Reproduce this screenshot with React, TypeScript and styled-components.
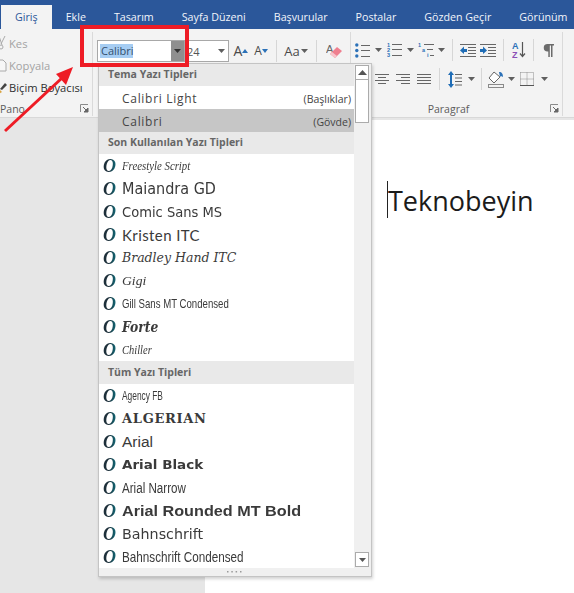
import styled, { createGlobalStyle } from "styled-components";

const Global = createGlobalStyle`
  html, body { margin: 0; padding: 0; background: #e6e6e6; }
  * { box-sizing: border-box; }
`;

const UI = `"Open Sans", "Noto Sans", sans-serif`;

const Page = styled.div`
  position: relative;
  width: 574px;
  height: 593px;
  overflow: hidden;
  font-family: ${UI};
  display: flex;
  flex-direction: column;
`;

const TabBar = styled.div`
  height: 29px;
  background: #2b579a;
  display: flex;
  align-items: flex-end;
  padding-left: 1px;
  white-space: nowrap;
  flex: none;
`;

const Tab = styled.div<{ $active?: boolean }>`
  height: ${(p) => (p.$active ? "24px" : "29px")};
  padding: ${(p) => (p.$active ? "3px" : "8px")} 14px 0;
  font-size: 10.7px;
  line-height: 18px;
  background: ${(p) => (p.$active ? "#f3f3f3" : "transparent")};
  color: ${(p) => (p.$active ? "#2b579a" : "#f2f5fa")};
`;

const Ribbon = styled.div`
  height: 89px;
  background: #f3f3f3;
  border-bottom: 1px solid #d8d8d8;
  display: flex;
  flex: none;
`;

const Group = styled.div<{ $width: number }>`
  width: ${(p) => p.$width}px;
  flex: none;
  display: flex;
  flex-direction: column;
  position: relative;
  border-right: 1px solid #dadada;
  margin: 3px 0 1px;
`;

const GroupBody = styled.div`
  flex: 1;
  display: flex;
  flex-direction: column;
`;

const GroupLabel = styled.div<{ $offset?: number }>`
  height: 15px;
  padding-top: 1px;
  font-size: 10.5px;
  line-height: 14px;
  text-align: center;
  color: #5c5c5c;
  padding-right: ${(p) => p.$offset ?? 0}px;
  position: relative;
`;

const Launcher = styled.svg`
  position: absolute;
  right: 3px;
  top: 3px;
`;

const ClipRow = styled.div<{ $muted?: boolean }>`
  height: 22px;
  display: flex;
  align-items: center;
  font-size: 11.2px;
  gap: 2px;
  color: ${(p) => (p.$muted ? "#a3a3a3" : "#2f2f2f")};
  white-space: nowrap;
`;

const ClipList = styled.div`
  flex: 1;
`;

const ToolRow = styled.div<{ $height: number; $pad?: number }>`
  height: ${(p) => p.$height}px;
  display: flex;
  align-items: center;
  padding-left: ${(p) => p.$pad ?? 0}px;
  flex: none;
`;

const Tool = styled.div<{ $width: number }>`
  width: ${(p) => p.$width}px;
  height: 20px;
  flex: none;
  display: flex;
  align-items: center;
  justify-content: center;
`;

const Sep = styled.div<{ $margin?: number }>`
  width: 1px;
  height: 22px;
  background: #d6d6d6;
  flex: none;
  margin: 0 ${(p) => p.$margin ?? 4}px;
`;

const Combo = styled.div<{ $width: number }>`
  width: ${(p) => p.$width}px;
  height: 22px;
  border: 1px solid #a8a8a8;
  background: #fff;
  display: flex;
  align-items: center;
  flex: none;
  font-size: 11px;
  color: #555;
`;

const Selected = styled.span`
  background: #a6cdf3;
  color: #33506e;
  margin-left: 2px;
  padding: 0 1px;
  line-height: 14px;
  width: 33px;
`;

const ComboButton = styled.div`
  margin-left: auto;
  width: 13px;
  height: 20px;
  background: #8f8f8f;
  display: flex;
  align-items: center;
  justify-content: center;
`;

const SizeText = styled.span`
  margin-left: 1px;
  flex: 1;
`;

const GrowLetter = styled.span<{ $size: number }>`
  font-size: ${(p) => p.$size}px;
  color: #4a4a4a;
  line-height: 1;
`;

const Workspace = styled.div`
  flex: 1;
  display: flex;
  background: #e6e6e6;
  padding: 2px 0 0 205px;
  min-height: 0;
`;

const Sheet = styled.div`
  flex: 1;
  background: #fff;
  padding: 61px 0 0 182px;
`;

const Caret = styled.div`
  display: inline-block;
  border-left: 1px solid #222;
  height: 37px;
  font-family: "Open Sans", sans-serif;
  font-size: 27px;
  line-height: 39px;
  color: #1b1b1b;
  white-space: nowrap;
`;

const Dropdown = styled.div`
  position: absolute;
  left: 98px;
  top: 63px;
  width: 274px;
  height: 514px;
  background: #fff;
  border: 1px solid #c4c4c4;
  box-shadow: 1px 2px 3px rgba(0, 0, 0, 0.18);
  display: flex;
  flex-direction: column;
`;

const DropBody = styled.div`
  flex: 1;
  display: flex;
  min-height: 0;
`;

const List = styled.div`
  width: 255px;
  flex: none;
  overflow: hidden;
`;

const Heading = styled.div<{ $height: number }>`
  height: ${(p) => p.$height}px;
  background: #e9e9e9;
  font-size: 10.5px;
  font-weight: 700;
  color: #666;
  padding: 0 0 2px 9px;
  display: flex;
  align-items: center;
`;

const ThemeRow = styled.div<{ $active?: boolean }>`
  height: 23px;
  display: flex;
  align-items: center;
  justify-content: space-between;
  padding: 2px 3px 0 23px;
  background: ${(p) => (p.$active ? "#c6c6c6" : "#fff")};
  font-size: 12px;
  letter-spacing: 0.7px;
  color: #444;
`;

const ThemeTag = styled.span`
  font-size: 10.5px;
  letter-spacing: 0;
  color: #444;
`;

const FontRow = styled.div`
  height: 23px;
  display: flex;
  align-items: center;
  padding-left: 4px;
  white-space: nowrap;
`;

const FontIcon = styled.span`
  width: 19px;
  flex: none;
  font-family: "Liberation Serif", serif;
  font-style: italic;
  font-weight: 700;
  font-size: 18px;
  line-height: 20px;
  background: linear-gradient(90deg, #1d2f3a 30%, #0b8493 85%);
  -webkit-background-clip: text;
  background-clip: text;
  color: transparent;
`;

const FontName = styled.span<{
  $family: string;
  $size: number;
  $weight?: number;
  $italic?: boolean;
  $squeeze?: number;
  $track?: number;
}>`
  font-family: ${(p) => p.$family};
  font-size: ${(p) => p.$size}px;
  line-height: 20px;
  font-weight: ${(p) => p.$weight ?? 400};
  font-style: ${(p) => (p.$italic ? "italic" : "normal")};
  letter-spacing: ${(p) => p.$track ?? 0}px;
  display: inline-block;
  transform: scaleX(${(p) => p.$squeeze ?? 1});
  transform-origin: left center;
  color: #3a3a3a;
`;

const Rail = styled.div`
  flex: 1;
  background: #f0f0f0;
  padding: 1px 2px 1px 1px;
  display: flex;
  flex-direction: column;
`;

const RailButton = styled.div`
  height: 15px;
  border: 1px solid #ababab;
  background: #fff;
  display: flex;
  align-items: center;
  justify-content: center;
  flex: none;
`;

const Thumb = styled.div`
  height: 43px;
  border: 1px solid #ababab;
  border-top: none;
  background: #fff;
  flex: none;
`;

const RailSpace = styled.div`
  flex: 1;
`;

const Grip = styled.div`
  height: 8px;
  flex: none;
  background: #f0f0f0;
  display: flex;
  align-items: center;
  justify-content: center;
  padding-right: 1px;
`;

const RedBox = styled.div`
  position: absolute;
  left: 80px;
  top: 25px;
  width: 109px;
  height: 42px;
  border: 4px solid #ee1c25;
`;

const RedArrow = styled.svg`
  position: absolute;
  left: 0;
  top: 60px;
`;

const Down = ({ color = "#5f5f5f" }: { color?: string }) => (
  <svg width="7" height="4" viewBox="0 0 7 4">
    <path d="M0 0h7L3.500 4z" fill={color} />
  </svg>
);

const Up = () => (
  <svg width="9" height="5" viewBox="0 0 9 5">
    <path d="M0 5h9L4.500 0z" fill="#555" />
  </svg>
);

const GripDots = () => (
  <svg width="15" height="2" viewBox="0 0 15 2">
    {[0, 4.3, 8.6, 13].map((x) => (
      <rect key={x} x={x} y="0" width="1.500" height="1.500" fill="#9a9a9a" />
    ))}
  </svg>
);

const Lines = ({ x = 0, w = 14, rows = [2, 6, 10] }: { x?: number; w?: number; rows?: number[] }) => (
  <>
    {rows.map((y) => (
      <rect key={y} x={x} y={y} width={w} height="1" fill="#666" />
    ))}
  </>
);

const Bullets = () => (
  <svg width="15" height="15" viewBox="0 0 15 15">
    {[2, 7.5, 13].map((y) => (
      <circle key={y} cx="1.800" cy={y} r="1.700" fill="#2b71b8" />
    ))}
    <Lines x={6} w={9} rows={[2, 7, 13]} />
  </svg>
);

const Numbers = () => (
  <svg width="15" height="17" viewBox="0 0 15 17">
    {["1", "2", "3"].map((n, i) => (
      <text key={n} x="0" y={4.5 + i * 5} fontFamily="Liberation Sans" fontWeight="700" fontSize="5.5" fill="#2b71b8">
        {n}
      </text>
    ))}
    <Lines x={5} w={10} rows={[2, 7, 13]} />
  </svg>
);

const Multilevel = () => (
  <svg width="17" height="17" viewBox="0 0 17 17">
    <text x="0" y="4.5" fontFamily="Liberation Sans" fontWeight="700" fontSize="5.5" fill="#2b71b8">1</text>
    <text x="4" y="9.5" fontFamily="Liberation Sans" fontWeight="700" fontSize="5.5" fill="#2b71b8">a</text>
    <text x="9" y="14.5" fontFamily="Liberation Sans" fontWeight="700" fontSize="5.5" fill="#2b71b8">i</text>
    <rect x="6" y="2" width="10" height="1" fill="#666" />
    <rect x="9" y="7" width="6" height="1" fill="#666" />
    <rect x="12" y="13" width="4" height="1" fill="#666" />
  </svg>
);

const Indent = ({ flip }: { flip?: boolean }) => (
  <svg width="16" height="13" viewBox="0 0 16 13">
    <rect x="0" y="0" width="16" height="1" fill="#666" />
    <rect x="8" y="3" width="8" height="1" fill="#666" />
    <rect x="8" y="6" width="8" height="1" fill="#666" />
    <rect x="8" y="9" width="8" height="1" fill="#666" />
    <rect x="0" y="12" width="16" height="1" fill="#666" />
    <path d={flip ? "M0 5h3V2.500L7 6.500 3 10V8H0z" : "M7 5H4V2.500L0 6.500 4 10V8h3z"} fill="#1f6cb5" />
  </svg>
);

const SortIcon = () => (
  <svg width="14" height="20" viewBox="0 -1 14 20">
    <text x="0" y="8" fontFamily="Liberation Sans" fontWeight="700" fontSize="9" fill="#2b71b8">A</text>
    <text x="0" y="16.500" fontFamily="Liberation Sans" fontWeight="700" fontSize="9" fill="#8b4fb5">Z</text>
    <path d="M10.500 1v14M8 12.500l2.500 3 2.500-3" stroke="#555" fill="none" strokeWidth="1.200" />
  </svg>
);

const Pilcrow = () => (
  <svg width="11" height="13" viewBox="0 0 11 13">
    <path d="M4.500 0H11v1.500H9.500V13H8V1.500H6.800V13H5.300V7.500h-.8A3.750 3.750 0 0 1 4.500 0z" fill="#6b6b6b" />
  </svg>
);

const AlignCenter = () => (
  <svg width="14" height="11" viewBox="0 0 14 11">
    <path d="M0 .5h14M3 3.500h8M0 6.500h14M3 9.500h8" stroke="#666" />
  </svg>
);

const AlignRight = () => (
  <svg width="14" height="11" viewBox="0 0 14 11">
    <path d="M0 .5h14M5 3.500h9M0 6.500h14M5 9.500h9" stroke="#666" />
  </svg>
);

const Justify = () => (
  <svg width="14" height="11" viewBox="0 0 14 11">
    <path d="M0 .5h14M0 3.500h14M0 6.500h14M0 9.500h14" stroke="#666" />
  </svg>
);

const LineSpacing = () => (
  <svg width="14" height="17" viewBox="0 0 14 17">
    <path d="M3 0 6 4H4v9h2l-3 4-3-4h2V4H0z" fill="#1f6cb5" />
    <path d="M7 3.500h7M7 7h7M7 10.500h7M7 14h7" stroke="#666" />
  </svg>
);

const Shading = () => (
  <svg width="16" height="17" viewBox="0 0 16 17">
    <path d="M6 1 1 7l5 5 6-6z" fill="#fff" stroke="#666" />
    <path d="M11 1c3 0 4 2 4 5l-2-1-1 1z" fill="#2b71b8" />
    <rect x="0.500" y="13.500" width="15" height="3" fill="#f3f3f3" stroke="#8a8a8a" />
  </svg>
);

const Borders = () => (
  <svg width="14" height="14" viewBox="0 0 14 14">
    <path
      d="M.5 .5h13v13M.5 .5v13M7 .5v13M.5 7h13"
      stroke="#8c8c8c"
      strokeDasharray="1 1"
      fill="none"
    />
    <path d="M0 13.500h14" stroke="#555" />
  </svg>
);

const Eraser = () => (
  <svg width="17" height="17" viewBox="0 0 17 17">
    <text x="0" y="10" fontFamily="Liberation Sans" fontSize="11" fill="#666">A</text>
    <path d="M4 11 11 4l5 4-7 7z" fill="#ef7f8f" />
    <path d="M4 11l2-2 5 4-2 2z" fill="#f8c5cc" />
  </svg>
);

const GrowMark = ({ down }: { down?: boolean }) => (
  <svg width="6" height="4" viewBox="0 0 6 4">
    <path d={down ? "M0 0h6L3 4z" : "M0 4h6L3 0z"} fill="#2b71b8" />
  </svg>
);

const ScissorsIcon = () => (
  <svg width="7" height="14" viewBox="0 0 7 14">
    <circle cx="1" cy="11" r="2" fill="none" stroke="#aaa" />
    <path d="M1 8 5 0M2 9l-3-9" stroke="#aaa" />
  </svg>
);

const PageIcon = () => (
  <svg width="7" height="13" viewBox="0 0 7 13">
    <path d="M-3 1h6l3 3v8h-9z" fill="#f7f7f7" stroke="#aaa" />
  </svg>
);

const BrushIcon = () => (
  <svg width="7" height="13" viewBox="0 0 7 13">
    <path d="M0 8 5 2l2 2-5 5z" fill="#444" />
    <path d="M-1 8l3 3-3 2z" fill="#d9a441" />
  </svg>
);

const LauncherIcon = () => (
  <Launcher width="9" height="9" viewBox="0 0 9 9">
    <path d="M.5 8V.5H8" stroke="#8a8a8a" fill="none" />
    <path d="M3 3l4 4M8 4v4H4z" stroke="#666" fill="#666" />
  </Launcher>
);

const themeFonts = [
  { name: "Calibri Light", tag: "(Başlıklar)" },
  { name: "Calibri", tag: "(Gövde)", active: true },
];

type Preview = {
  name: string;
  family: string;
  size: number;
  weight?: number;
  italic?: boolean;
  squeeze?: number;
  track?: number;
};

const SERIF = `"Liberation Serif", serif`;
const SANS = `"Liberation Sans", sans-serif`;
const DEJA = `"DejaVu Sans", sans-serif`;
const DEJA_SERIF = `"DejaVu Serif", serif`;

const recentFonts: Preview[] = [
  { name: "Freestyle Script", family: SERIF, size: 12, italic: true, squeeze: 0.9 },
  { name: "Maiandra GD", family: DEJA, size: 15, squeeze: 0.96 },
  { name: "Comic Sans MS", family: DEJA, size: 13.5, squeeze: 0.97 },
  { name: "Kristen ITC", family: `"Lato", sans-serif`, size: 15, track: 0.4 },
  { name: "Bradley Hand ITC", family: DEJA_SERIF, size: 12.5, italic: true, squeeze: 1.0 },
  { name: "Gigi", family: SERIF, size: 13, italic: true, squeeze: 1.05 },
  { name: "Gill Sans MT Condensed", family: SANS, size: 13, squeeze: 0.74 },
  { name: "Forte", family: DEJA_SERIF, size: 14, weight: 700, italic: true, squeeze: 0.88 },
  { name: "Chiller", family: SERIF, size: 12.5, italic: true, squeeze: 0.84 },
];

const allFonts: Preview[] = [
  { name: "Agency FB", family: SANS, size: 13.5, squeeze: 0.62 },
  { name: "ALGERIAN", family: DEJA_SERIF, size: 13, weight: 700, track: 0.7 },
  { name: "Arial", family: SANS, size: 15.5 },
  { name: "Arial Black", family: DEJA, size: 12.5, weight: 700, squeeze: 1.08 },
  { name: "Arial Narrow", family: SANS, size: 14, squeeze: 0.83 },
  { name: "Arial Rounded MT Bold", family: SANS, size: 15, weight: 700, squeeze: 1.08 },
  { name: "Bahnschrift", family: DEJA, size: 14, squeeze: 1.02 },
  { name: "Bahnschrift Condensed", family: SANS, size: 15, weight: 400, squeeze: 0.78 },
];

const Row = ({ font }: { font: Preview }) => (
  <FontRow>
    <FontIcon>O</FontIcon>
    <FontName
      $family={font.family}
      $size={font.size}
      $weight={font.weight}
      $italic={font.italic}
      $squeeze={font.squeeze}
      $track={font.track}
    >
      {font.name}
    </FontName>
  </FontRow>
);

const tabs = ["Giriş", "Ekle", "Tasarım", "Sayfa Düzeni", "Başvurular", "Postalar", "Gözden Geçir", "Görünüm"];

export default function App() {
  return (
    <Page>
      <Global />
      <TabBar>
        {tabs.map((t, i) => (
          <Tab key={t} $active={i === 0}>
            {t}
          </Tab>
        ))}
      </TabBar>

      <Ribbon>
        <Group $width={93}>
          <GroupBody>
            <ClipList>
              <ClipRow $muted>
                <ScissorsIcon />
                Kes
              </ClipRow>
              <ClipRow $muted>
                <PageIcon />
                Kopyala
              </ClipRow>
              <ClipRow>
                <BrushIcon />
                Biçim Boyacısı
              </ClipRow>
            </ClipList>
          </GroupBody>
          <GroupLabel $offset={70}>
            Pano
            <LauncherIcon />
          </GroupLabel>
        </Group>

        <Group $width={258}>
          <GroupBody>
            <ToolRow $height={38} $pad={4}>
              <Combo $width={88}>
                <Selected>Calibri</Selected>
                <ComboButton>
                  <Down color="#333" />
                </ComboButton>
              </Combo>
              <Combo $width={44}>
                <SizeText>24</SizeText>
                <Tool $width={13}>
                  <Down />
                </Tool>
              </Combo>
              <Tool $width={2} />
              <Tool $width={20}>
                <GrowLetter $size={14}>A</GrowLetter>
                <GrowMark />
              </Tool>
              <Tool $width={20}>
                <GrowLetter $size={12}>A</GrowLetter>
                <GrowMark down />
              </Tool>
              <Sep $margin={5} />
              <Tool $width={30}>
                <GrowLetter $size={13}>Aa</GrowLetter>
                <Tool $width={10}>
                  <Down />
                </Tool>
              </Tool>
              <Sep $margin={4} />
              <Tool $width={26}>
                <Eraser />
              </Tool>
            </ToolRow>
          </GroupBody>
        </Group>

        <Group $width={212}>
          <GroupBody>
            <ToolRow $height={36} $pad={2}>
              <Tool $width={18}>
                <Bullets />
              </Tool>
              <Tool $width={14}>
                <Down />
              </Tool>
              <Tool $width={18}>
                <Numbers />
              </Tool>
              <Tool $width={14}>
                <Down />
              </Tool>
              <Tool $width={18}>
                <Multilevel />
              </Tool>
              <Tool $width={12}>
                <Down />
              </Tool>
              <Sep $margin={5} />
              <Tool $width={20}>
                <Indent />
              </Tool>
              <Tool $width={20}>
                <Indent flip />
              </Tool>
              <Sep $margin={5} />
              <Tool $width={20}>
                <SortIcon />
              </Tool>
              <Sep $margin={4} />
              <Tool $width={20}>
                <Pilcrow />
              </Tool>
            </ToolRow>
            <ToolRow $height={22} $pad={20}>
              <Tool $width={21}>
                <AlignCenter />
              </Tool>
              <Tool $width={21}>
                <AlignRight />
              </Tool>
              <Tool $width={21}>
                <Justify />
              </Tool>
              <Sep $margin={5} />
              <Tool $width={20}>
                <LineSpacing />
              </Tool>
              <Tool $width={12}>
                <Down />
              </Tool>
              <Sep $margin={4} />
              <Tool $width={20}>
                <Shading />
              </Tool>
              <Tool $width={11}>
                <Down />
              </Tool>
              <Tool $width={20}>
                <Borders />
              </Tool>
              <Tool $width={15}>
                <Down />
              </Tool>
            </ToolRow>
          </GroupBody>
          <GroupLabel $offset={16}>
            Paragraf
            <LauncherIcon />
          </GroupLabel>
        </Group>
      </Ribbon>

      <Workspace>
        <Sheet>
          <Caret>Teknobeyin</Caret>
        </Sheet>
      </Workspace>

      <Dropdown>
        <DropBody>
          <List>
            <Heading $height={22}>Tema Yazı Tipleri</Heading>
            {themeFonts.map((f) => (
              <ThemeRow key={f.name} $active={f.active}>
                {f.name}
                <ThemeTag>{f.tag}</ThemeTag>
              </ThemeRow>
            ))}
            <Heading $height={22}>Son Kullanılan Yazı Tipleri</Heading>
            {recentFonts.map((f) => (
              <Row key={f.name} font={f} />
            ))}
            <Heading $height={23}>Tüm Yazı Tipleri</Heading>
            {allFonts.map((f) => (
              <Row key={f.name} font={f} />
            ))}
          </List>
          <Rail>
            <RailButton>
              <Up />
            </RailButton>
            <Thumb />
            <RailSpace />
            <RailButton>
              <Down color="#555" />
            </RailButton>
          </Rail>
        </DropBody>
        <Grip>
          <GripDots />
        </Grip>
      </Dropdown>

      <RedBox />
      <RedArrow width="80" height="75" viewBox="0 0 80 75">
        <path d="M5 71 62 18" stroke="#ee1c25" strokeWidth="3" />
        <path d="M73 7 56 14 66 25z" fill="#ee1c25" />
      </RedArrow>
    </Page>
  );
}
